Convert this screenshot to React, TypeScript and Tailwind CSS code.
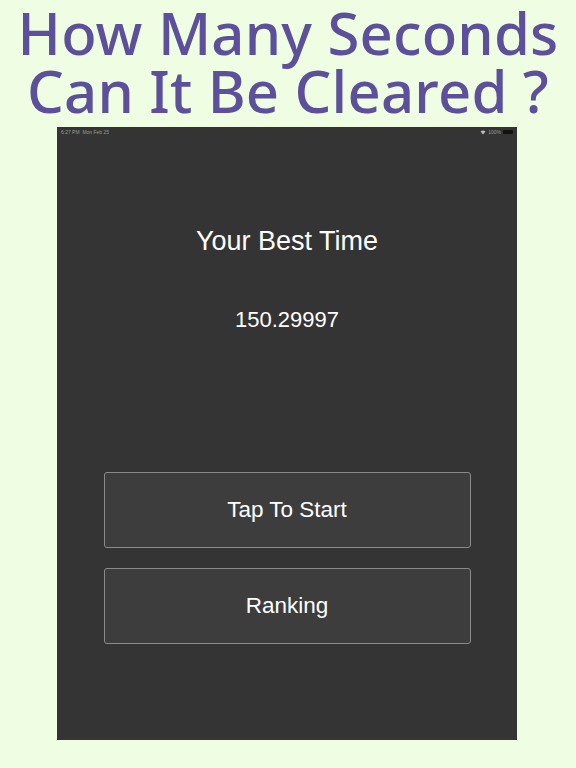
export default function App() {
  return (
    <div className="w-[576px] h-[768px] bg-[#effee3] flex flex-col items-center overflow-hidden">
      <h1
        className="mt-[4px] text-center text-[#5c509c] font-medium text-[58px] leading-[58px] tracking-[0.2px] whitespace-nowrap"
        style={{ fontFamily: '"Noto Sans", "Open Sans", sans-serif' }}
      >
        How Many Seconds
        <br />
        Can It Be Cleared ?
      </h1>

      <div
        className="mt-[7px] mr-[2px] w-[460px] h-[613px] bg-[#343434] flex flex-col items-center text-white"
        style={{ fontFamily: '"Liberation Sans", Arial, sans-serif' }}
      >
        <div className="w-full h-[10px] px-[4px] flex items-center justify-between text-[5px] leading-[6px] text-[#9a9a9a]">
          <span>6:27 PM&nbsp;&nbsp;Mon Feb 25</span>
          <span className="flex items-center gap-[2px]">
            <svg width="6" height="5" viewBox="0 0 12 10">
              <path d="M6 9 L1 3 Q6 -1 11 3 Z" fill="#bbbbbb" />
            </svg>
            100%
            <span className="w-[10px] h-[4px] bg-[#111111] rounded-[1px]" />
          </span>
        </div>

        <div className="mt-[88px] text-[27px] leading-[32px]">Your Best Time</div>
        <div className="mt-[50px] text-[22px] leading-[26px]">150.29997</div>

        <button className="mt-[139px] w-[367px] h-[76px] rounded-[3px] border border-[#8a8a8a] bg-[#3d3d3d] text-[22.5px] text-white">
          Tap To Start
        </button>
        <button className="mt-[20px] w-[367px] h-[76px] rounded-[3px] border border-[#8a8a8a] bg-[#3d3d3d] text-[22.5px] text-white">
          Ranking
        </button>
      </div>
    </div>
  );
}
